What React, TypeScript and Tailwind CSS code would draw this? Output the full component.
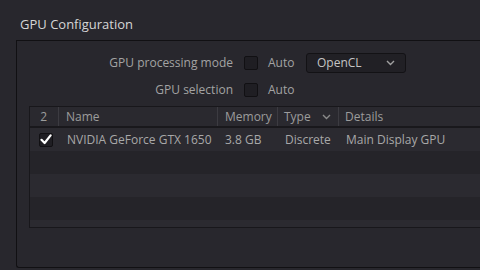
import React from "react";

const font = { fontFamily: '"Open Sans", "Noto Sans", sans-serif' };

function Box({ checked = false }: { checked?: boolean }) {
  return (
    <div className="w-[14px] h-[14px] shrink-0 rounded-[2px] border border-[#111013] bg-[#1f1e23] flex items-center justify-center">
      {checked && (
        <svg width="12" height="11" viewBox="0 0 12 11">
          <path d="M1.5 5.8 L4.6 9 L10.6 1.4" fill="none" stroke="#ffffff" strokeWidth="2.2" strokeLinecap="round" strokeLinejoin="round" />
        </svg>
      )}
    </div>
  );
}

function Chevron({ color = "#9a9a9a" }: { color?: string }) {
  return (
    <svg width="9" height="6" viewBox="0 0 9 6">
      <path d="M1 1 L4.5 4.5 L8 1" fill="none" stroke={color} strokeWidth="1.4" />
    </svg>
  );
}

export default function App() {
  const rows = [0, 1, 2, 3, 4];
  return (
    <div className="w-[480px] h-[270px] overflow-hidden bg-[#28272d] text-[#a3a3a3]" style={font}>
      <div className="pl-[20px] pt-[14px] h-[40px] text-[13px] leading-[20px] text-[#d6d6d6]">GPU Configuration</div>
      <div className="ml-[16px] w-[480px] h-[228px] border-l border-t border-b border-[#111013] rounded-bl-[3px] text-[12px]">
        <div className="flex items-center h-[20px] mt-[12px]">
          <div className="w-[216px] text-right">GPU processing mode</div>
          <div className="ml-[11px]"><Box /></div>
          <div className="ml-[10px] w-[38px]">Auto</div>
          <div className="w-[100px] h-[20px] rounded-[3px] border border-[#131215] bg-[#212025] flex items-center pl-[10px] pr-[10px] text-[#c4c4c4]">
            <span className="flex-1">OpenCL</span>
            <Chevron color="#a0a0a0" />
          </div>
        </div>
        <div className="flex items-center h-[20px] mt-[7px]">
          <div className="w-[216px] text-right">GPU selection</div>
          <div className="ml-[11px]"><Box /></div>
          <div className="ml-[10px] w-[38px]">Auto</div>
        </div>
        <div className="ml-[12px] mt-[6px] h-[122px] border border-[#18171b] overflow-hidden flex flex-col">
          <div className="h-[21px] shrink-0 flex items-center bg-[#2a292f] border-b-2 border-[#19181c] text-[#9c9c9c]">
            <div className="w-[29px] h-full flex items-center justify-end pr-[11px] border-r border-[#3c3b41]">2</div>
            <div className="w-[159px] h-full flex items-center pl-[7px] border-r border-[#3c3b41]">Name</div>
            <div className="w-[60px] h-full flex items-center pl-[7px] border-r border-[#3c3b41]">Memory</div>
            <div className="w-[61px] h-full flex items-center pl-[6px] pr-[7px] border-r border-[#3c3b41]">
              <span className="flex-1">Type</span>
              <Chevron color="#8a8a8a" />
            </div>
            <div className="flex-1 h-full flex items-center pl-[6px]">Details</div>
          </div>
          {rows.map((i) => (
            <div key={i} className={`h-[23px] shrink-0 flex items-center ${i % 2 === 0 ? "bg-[#2b2a30]" : "bg-[#252429]"} text-[#a8a8a8]`}>
              {i === 0 && (
                <>
                  <div className="w-[29px] flex justify-end pr-[6px]"><Box checked /></div>
                  <div className="w-[159px] pl-[8px]">NVIDIA GeForce GTX 1650</div>
                  <div className="w-[60px] pl-[7px]">3.8 GB</div>
                  <div className="w-[61px] pl-[7px]">Discrete</div>
                  <div className="flex-1 pl-[7px]">Main Display GPU</div>
                </>
              )}
            </div>
          ))}
        </div>
      </div>
    </div>
  );
}
